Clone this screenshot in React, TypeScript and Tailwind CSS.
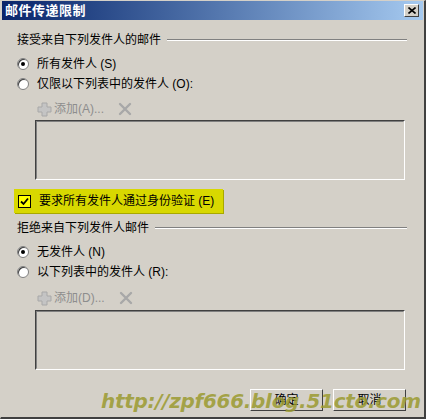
import React from "react";

const font = { fontFamily: '"Liberation Sans", "Noto Sans CJK SC", sans-serif' };

function Radio({ checked }: { checked?: boolean }) {
  return (
    <span className="relative w-[12px] h-[12px] shrink-0 rounded-full bg-white border border-[#808080] shadow-[inset_1px_1px_0_#404040]">
      {checked && (
        <span className="absolute left-[3px] top-[3px] w-[4px] h-[4px] rounded-full bg-black" />
      )}
    </span>
  );
}

function GroupTitle({ text }: { text: string }) {
  return (
    <div className="flex items-center gap-[6px] h-[16px]">
      <span>{text}</span>
      <div className="flex-1 border-t border-[#808080] border-b-white border-b h-0" />
    </div>
  );
}

function AddBar({ label }: { label: string }) {
  return (
    <div className="flex items-center h-[18px] pl-[19px] text-[#8d8d8d]">
      <svg width="17" height="17" viewBox="0 0 17 17" className="shrink-0">
        <path d="M6 2h5v4h4v5h-4v4H6v-4H2V6h4z" fill="#c4c4c4" stroke="#a8a8a8" />
      </svg>
      <span className="ml-[1px]">{label}</span>
      <svg width="14" height="14" viewBox="0 0 14 14" className="ml-[14px] shrink-0">
        <path d="M2 2L12 12M12 2L2 12" stroke="#a8a8a8" strokeWidth="2.4" strokeLinecap="round" />
      </svg>
    </div>
  );
}

function ListBox() {
  return (
    <div className="ml-[18px] mr-[2px] h-[60px] border border-t-[#404040] border-l-[#404040] border-b-white border-r-white">
      <div className="h-full border border-t-[#808080] border-l-[#808080] border-b-[#d4d0c8] border-r-[#d4d0c8]" />
    </div>
  );
}

function Btn({ label }: { label: string }) {
  return (
    <div className="w-[73px] h-[22px] border border-t-white border-l-white border-b-[#404040] border-r-[#404040] flex items-center justify-center text-black">
      {label}
    </div>
  );
}

export default function App() {
  return (
    <div className="w-[426px] h-[419px] bg-[#d4d0c8] text-[12px] text-black overflow-hidden" style={font}>
      <div className="relative w-full h-full border-r-2 border-b-2 border-r-[#404040] border-b-[#404040] border-t border-l border-t-[#d4d0c8] border-l-[#d4d0c8]">
        <div className="mx-[1px] mt-0 h-[19px] flex items-center justify-between pl-[3px] pr-[4px] bg-gradient-to-r from-[#0a246a] to-[#a6caf0]">
          <span className="text-white font-bold text-[13px] tracking-[0.5px]">邮件传递限制</span>
          <div className="w-[15px] h-[13px] bg-[#d4d0c8] border border-t-white border-l-white border-b-[#404040] border-r-[#404040] flex items-center justify-center">
            <svg width="8" height="7" viewBox="0 0 8 7">
              <path d="M0.5 0.5L7.5 6.5M7.5 0.5L0.5 6.5" stroke="#000" strokeWidth="1.6" />
            </svg>
          </div>
        </div>

        <div className="pl-[16px] pr-[17px] pt-[12px]">
          <GroupTitle text="接受来自下列发件人的邮件" />
          <div className="mt-[8px] flex flex-col gap-[4px]">
            <div className="flex items-center gap-[8px] h-[16px]">
              <Radio checked />
              <span>所有发件人 (S)</span>
            </div>
            <div className="flex items-center gap-[8px] h-[16px]">
              <Radio />
              <span>仅限以下列表中的发件人 (O):</span>
            </div>
          </div>
          <div className="mt-[8px]">
            <AddBar label="添加(A)..." />
          </div>
          <div className="mt-[2px]">
            <ListBox />
          </div>

          <div className="mt-[9px] -ml-[3px] w-[209px] h-[24px] bg-[#d8d800] flex items-center pl-[4px] gap-[8px] shadow-[1px_1px_0_#a8a800]">
            <span className="w-[13px] h-[13px] bg-[#ffff00] border border-black flex items-center justify-center">
              <svg width="9" height="9" viewBox="0 0 9 9">
                <path d="M1 4.5L3.5 7L8 1.5" stroke="#000" strokeWidth="1.8" fill="none" />
              </svg>
            </span>
            <span>要求所有发件人通过身份验证 (E)</span>
          </div>

          <div className="mt-[7px]">
            <GroupTitle text="拒绝来自下列发件人邮件" />
          </div>
          <div className="mt-[8px] flex flex-col gap-[4px]">
            <div className="flex items-center gap-[8px] h-[16px]">
              <Radio checked />
              <span>无发件人 (N)</span>
            </div>
            <div className="flex items-center gap-[8px] h-[16px]">
              <Radio />
              <span>以下列表中的发件人 (R):</span>
            </div>
          </div>
          <div className="mt-[9px]">
            <AddBar label="添加(D)..." />
          </div>
          <div className="mt-[3px]">
            <ListBox />
          </div>

          <div className="mt-[19px] flex justify-end gap-[10px] pr-[1px]">
            <Btn label="确定" />
            <Btn label="取消" />
          </div>
        </div>

        <div
          className="absolute left-[100px] top-[385px] text-[20px] font-bold italic text-[#9a9a30]/85 tracking-[-0.3px] pointer-events-none whitespace-nowrap"
          style={{ fontFamily: '"DejaVu Sans", sans-serif' }}
        >
          http://zpf666.blog.51cto.com
        </div>
      </div>
    </div>
  );
}
